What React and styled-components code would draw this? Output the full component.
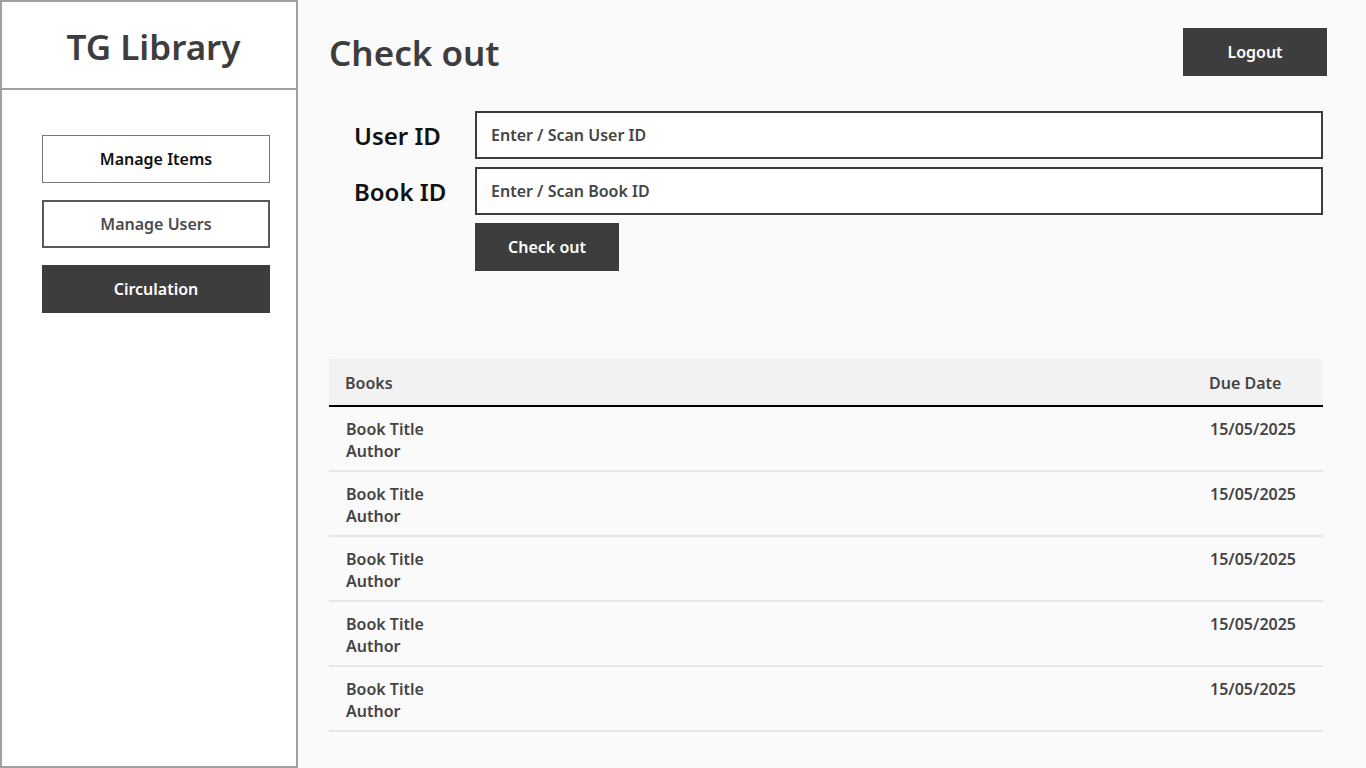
import React from 'react'
import styled, { createGlobalStyle } from 'styled-components'

const GlobalStyle = createGlobalStyle`
  html, body {
    margin: 0;
    padding: 0;
    background: #fafafa;
    font-family: "Noto Sans", "Open Sans", sans-serif;
  }
  * { box-sizing: border-box; }
`

const Layout = styled.div`
  display: flex;
  width: 1366px;
  height: 768px;
  overflow: hidden;
`

const Sidebar = styled.aside`
  width: 298px;
  flex-shrink: 0;
  height: 100%;
  background: #fff;
  border: 2px solid #a0a0a0;
  display: flex;
  flex-direction: column;
`

const Brand = styled.div`
  height: 88px;
  border-bottom: 2px solid #a0a0a0;
  display: flex;
  align-items: center;
  justify-content: center;
  font-size: 35px;
  font-weight: 600;
  color: #3d3d3d;
  padding: 2px 0 0 9px;
`

const Nav = styled.nav`
  display: flex;
  flex-direction: column;
  gap: 17px;
  padding: 45px 26px 0 40px;
`

const NavButton = styled.button`
  height: 48px;
  width: 228px;
  font-family: inherit;
  font-size: 16px;
  font-weight: 600;
  cursor: pointer;
  background: ${({ active }) => (active ? '#3d3d3d' : '#fff')};
  color: ${({ active, muted }) => (active ? '#fff' : muted ? '#4a4a4a' : '#111')};
  border: ${({ active, muted }) =>
    active ? '0' : muted ? '2px solid #595959' : '1px solid #777'};
`

const Main = styled.main`
  flex: 1;
  padding: 28px 39px 0 31px;
  background: #fafafa;
`

const Header = styled.div`
  display: flex;
  align-items: center;
  justify-content: space-between;
  height: 48px;
`

const Title = styled.h1`
  margin: 0;
  font-size: 35px;
  font-weight: 600;
  color: #3d3d3d;
`

const DarkButton = styled.button`
  height: 48px;
  width: 144px;
  background: #3d3d3d;
  color: #fff;
  border: 0;
  font-family: inherit;
  font-size: 16px;
  font-weight: 600;
  cursor: pointer;
`

const Form = styled.form`
  display: grid;
  grid-template-columns: 121px 1fr;
  row-gap: 8px;
  margin: 35px 4px 0 25px;
  align-items: center;
`

const Label = styled.label`
  font-size: 24px;
  font-weight: 600;
  color: #111;
`

const Input = styled.input`
  height: 48px;
  width: 100%;
  border: 2px solid #3d3d3d;
  background: #fff;
  padding: 0 14px;
  font-family: inherit;
  font-size: 16px;
  font-weight: 600;
  color: #444;
  outline: none;

  &::placeholder {
    color: #444;
    opacity: 1;
  }
`

const Table = styled.table`
  margin-top: 88px;
  width: 994px;
  border-collapse: collapse;
  font-size: 16px;
  font-weight: 600;
  color: #444;
`

const Th = styled.th`
  background: #f2f2f2;
  height: 47px;
  padding: 1px 16px 0;
  text-align: left;
  font-weight: 600;
  border-bottom: 2px solid #000;
  width: ${({ w }) => w || 'auto'};
`

const Td = styled.td`
  padding: 11px 17px 8px;
  line-height: 22px;
  vertical-align: top;
  border-bottom: 2px solid #e6e6e6;
`

const rows = Array.from({ length: 5 }, () => ({
  title: 'Book Title',
  author: 'Author',
  due: '15/05/2025',
}))

export default function App() {
  return (
    <>
      <GlobalStyle />
      <Layout>
        <Sidebar>
          <Brand>TG Library</Brand>
          <Nav>
            <NavButton>Manage Items</NavButton>
            <NavButton muted>Manage Users</NavButton>
            <NavButton active>Circulation</NavButton>
          </Nav>
        </Sidebar>
        <Main>
          <Header>
            <Title>Check out</Title>
            <DarkButton>Logout</DarkButton>
          </Header>
          <Form onSubmit={(e) => e.preventDefault()}>
            <Label>User ID</Label>
            <Input placeholder="Enter / Scan User ID" />
            <Label>Book ID</Label>
            <Input placeholder="Enter / Scan Book ID" />
            <span />
            <DarkButton type="submit">Check out</DarkButton>
          </Form>
          <Table>
            <thead>
              <tr>
                <Th>Books</Th>
                <Th w="130px">Due Date</Th>
              </tr>
            </thead>
            <tbody>
              {rows.map((r, i) => (
                <tr key={i}>
                  <Td>
                    {r.title}
                    <br />
                    {r.author}
                  </Td>
                  <Td>{r.due}</Td>
                </tr>
              ))}
            </tbody>
          </Table>
        </Main>
      </Layout>
    </>
  )
}
